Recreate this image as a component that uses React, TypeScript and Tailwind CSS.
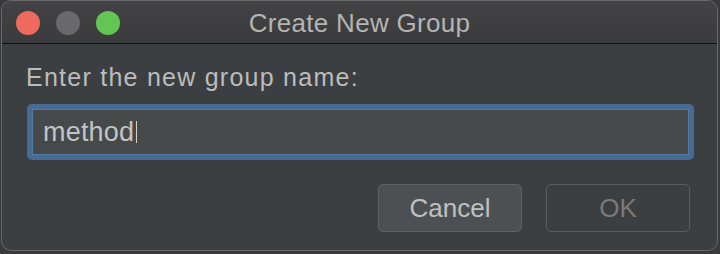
import React from "react";

export default function App() {
  return (
    <div className="w-[720px] h-[254px] bg-[#3a3a3a] pt-0" style={{ fontFamily: '"Liberation Sans", Arial, sans-serif' }}>
      <div className="ml-[1px] w-[717px] h-[251px] rounded-[10px] border border-[#686868] bg-[#3c3f41] overflow-hidden flex flex-col">
        <div className="h-[43px] shrink-0 bg-gradient-to-b from-[#434345] to-[#3b3b3d] border-b border-[#141414] relative flex items-center">
          <div className="flex items-center gap-[16px] pl-[14px] mt-[2px]">
            <div className="w-[24px] h-[24px] rounded-full bg-[#ee6a5f]" />
            <div className="w-[24px] h-[24px] rounded-full bg-[#69696b]" />
            <div className="w-[24px] h-[24px] rounded-full bg-[#62c554]" />
          </div>
          <div className="absolute inset-0 flex items-center justify-center text-[26px] tracking-[0.3px] text-[#b4b4b4] pt-[2px]">
            Create New Group
          </div>
        </div>
        <div className="flex-1 flex flex-col pl-[25px] pr-[27px]">
          <div className="mt-[19px] -ml-[1px] text-[25px] leading-[28px] tracking-[1.25px] text-[#bcbcbc]">Enter the new group name:</div>
          <div className="mt-[13px] w-[667px] h-[56px] rounded-[5px] bg-[#476b92] p-[5px]">
            <div className="w-full h-full bg-[#45494a] border border-[#5079a3] flex items-center pl-[10px] text-[27px] tracking-[0.2px] text-[#c3c3c3]">
              <span>method</span>
              <span className="w-[1px] h-[22px] bg-[#d0d0d0] ml-[2px]" />
            </div>
          </div>
          <div className="mt-[24px] flex justify-end gap-[24px]">
            <div className="w-[144px] h-[48px] rounded-[5px] border border-[#5f6263] bg-[#4c5052] flex items-center justify-center text-[26px] text-[#c0c0c0]">
              Cancel
            </div>
            <div className="w-[144px] h-[48px] rounded-[5px] border border-[#5a5d5e] bg-[#3c3f41] flex items-center justify-center text-[26px] text-[#7a7a7a]">
              OK
            </div>
          </div>
        </div>
      </div>
    </div>
  );
}
